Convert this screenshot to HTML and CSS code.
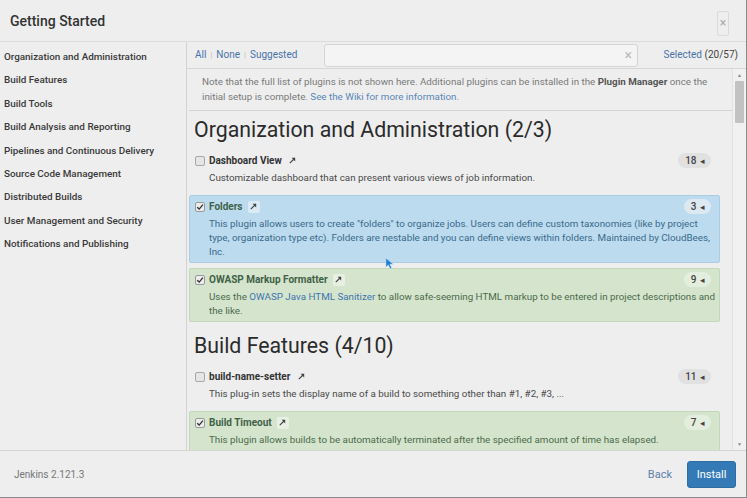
FILE: index.html
```html
<!DOCTYPE html>
<html>
<head>
<meta charset="utf-8">
<link rel="stylesheet" href="styles.css">
</head>
<body>
<div class="modal">
  <div class="header">
    <div class="title">Getting Started</div>
    <div class="close">×</div>
  </div>
  <div class="body">
    <div class="sidebar">
      <div class="cat">Organization and Administration</div>
      <div class="cat">Build Features</div>
      <div class="cat">Build Tools</div>
      <div class="cat">Build Analysis and Reporting</div>
      <div class="cat">Pipelines and Continuous Delivery</div>
      <div class="cat">Source Code Management</div>
      <div class="cat">Distributed Builds</div>
      <div class="cat">User Management and Security</div>
      <div class="cat">Notifications and Publishing</div>
    </div>
    <div class="main">
      <div class="toolbar">
        <div class="filters"><a>All</a><span class="sep">|</span><a>None</a><span class="sep">|</span><a>Suggested</a></div>
        <div class="search"><span class="clear">×</span></div>
        <div class="selected"><a>Selected</a> (20/57)</div>
      </div>
      <div class="scrollwrap">
        <div class="content">
          <div class="note">Note that the full list of plugins is not shown here. Additional plugins can be installed in the <b>Plugin Manager</b> once the initial setup is complete. <a>See the Wiki for more information.</a></div>

          <h2 class="heading">Organization and Administration (2/3)</h2>
          <div class="plugin">
            <div class="phead">
              <span class="cb"></span><span class="pname">Dashboard View</span><span class="ext"><svg viewBox="0 0 10 10" width="9" height="9"><path d="M2 8 L7.5 2.5" stroke="#444" stroke-width="1.3"/><path d="M4 2 H8 V6 Z" fill="#444"/></svg></span>
              <span class="badge">18 <i>◂</i></span>
            </div>
            <div class="pdesc">Customizable dashboard that can present various views of job information.</div>
          </div>
          <div class="plugin info">
            <div class="phead">
              <span class="cb on"><svg viewBox="0 0 10 10" width="8" height="8"><path d="M1.5 5.2 L4 7.6 L8.6 2" stroke="#333" stroke-width="1.7" fill="none"/></svg></span><span class="pname">Folders</span><span class="ext"><svg viewBox="0 0 10 10" width="9" height="9"><path d="M2 8 L7.5 2.5" stroke="#444" stroke-width="1.3"/><path d="M4 2 H8 V6 Z" fill="#444"/></svg></span>
              <span class="badge">3 <i>◂</i></span>
            </div>
            <div class="pdesc">This plugin allows users to create "folders" to organize jobs. Users can define custom taxonomies (like by project type, organization type etc). Folders are nestable and you can define views within folders. Maintained by CloudBees, Inc.</div>
          </div>
          <div class="plugin success">
            <div class="phead">
              <span class="cb on"><svg viewBox="0 0 10 10" width="8" height="8"><path d="M1.5 5.2 L4 7.6 L8.6 2" stroke="#333" stroke-width="1.7" fill="none"/></svg></span><span class="pname">OWASP Markup Formatter</span><span class="ext"><svg viewBox="0 0 10 10" width="9" height="9"><path d="M2 8 L7.5 2.5" stroke="#444" stroke-width="1.3"/><path d="M4 2 H8 V6 Z" fill="#444"/></svg></span>
              <span class="badge">9 <i>◂</i></span>
            </div>
            <div class="pdesc">Uses the <a>OWASP Java HTML Sanitizer</a> to allow safe-seeming HTML markup to be entered in project descriptions and the like.</div>
          </div>

          <h2 class="heading">Build Features (4/10)</h2>
          <div class="plugin">
            <div class="phead">
              <span class="cb"></span><span class="pname">build-name-setter</span><span class="ext"><svg viewBox="0 0 10 10" width="9" height="9"><path d="M2 8 L7.5 2.5" stroke="#444" stroke-width="1.3"/><path d="M4 2 H8 V6 Z" fill="#444"/></svg></span>
              <span class="badge">11 <i>◂</i></span>
            </div>
            <div class="pdesc">This plug-in sets the display name of a build to something other than #1, #2, #3, ...</div>
          </div>
          <div class="plugin success">
            <div class="phead">
              <span class="cb on"><svg viewBox="0 0 10 10" width="8" height="8"><path d="M1.5 5.2 L4 7.6 L8.6 2" stroke="#333" stroke-width="1.7" fill="none"/></svg></span><span class="pname">Build Timeout</span><span class="ext"><svg viewBox="0 0 10 10" width="9" height="9"><path d="M2 8 L7.5 2.5" stroke="#444" stroke-width="1.3"/><path d="M4 2 H8 V6 Z" fill="#444"/></svg></span>
              <span class="badge">7 <i>◂</i></span>
            </div>
            <div class="pdesc">This plugin allows builds to be automatically terminated after the specified amount of time has elapsed.</div>
          </div>
        </div>
        <div class="scrollbar">
          <div class="arrow up">▲</div>
          <div class="track"><div class="thumb"></div></div>
          <div class="arrow down">▼</div>
        </div>
        <svg class="cursor" viewBox="0 0 12 14" width="11" height="13"><path d="M1 1 L1 11 L3.6 8.6 L5.6 12.8 L7.4 12 L5.4 7.9 L9 7.9 Z" fill="#1f7fd1" stroke="#cfe4f5" stroke-width="0.6"/></svg>
      </div>
    </div>
  </div>
  <div class="footer">
    <div class="version">Jenkins 2.121.3</div>
    <div class="actions">
      <a class="back">Back</a>
      <a class="install">Install</a>
    </div>
  </div>
</div>
</body>
</html>
```
FILE: styles.css
```css
* { box-sizing: border-box; }
html, body { margin: 0; padding: 0; }
body {
  font-family: Roboto, "Liberation Sans", Arial, sans-serif;
  background: #eeeeee;
  color: #333;
  width: 747px;
  height: 498px;
  overflow: hidden;
}
a { color: #4a72a8; text-decoration: none; }

.modal {
  width: 747px;
  height: 498px;
  display: flex;
  flex-direction: column;
  background: #eeeeee;
  border-right: 1px solid #8a8a8a;
  border-bottom: 1px solid #8a8a8a;
}

.header {
  height: 42px;
  flex: none;
  display: flex;
  align-items: center;
  justify-content: space-between;
  padding: 0 17px 0 10px;
  border-bottom: 1px solid #dcdcdc;
}
.title { font-size: 14px; font-weight: 500; color: #333; }
.close {
  width: 12px;
  height: 25px;
  border: 1px solid #dadada;
  border-radius: 2px;
  color: #aaa;
  font-size: 12px;
  line-height: 23px;
  text-align: center;
  margin-top: 5px;
}

.body { flex: 1; display: flex; min-height: 0; }

.sidebar {
  width: 187px;
  flex: none;
  border-right: 1px solid #d2d2d2;
  padding-top: 3px;
}
.cat {
  height: 23.4px;
  line-height: 23.4px;
  padding-left: 4px;
  font-size: 9.9px;
  font-weight: 500;
  color: #3a3a3a;
  white-space: nowrap;
}

.main { flex: 1; display: flex; flex-direction: column; min-width: 0; }

.toolbar {
  height: 27px;
  flex: none;
  display: flex;
  align-items: center;
  border-bottom: 1px solid #d6d6d6;
  padding: 0 8px 1px 8px;
  font-size: 10px;
}
.filters { width: 129px; flex: none; }
.filters a { color: #4a72a8; }
.sep { color: #bbb; font-size: 8px; margin: 0 4px; position: relative; top: -1px; }
.search {
  width: 314px;
  height: 23px;
  flex: none;
  border: 1px solid #d4d4d4;
  border-radius: 3px;
  background: #f4f4f4;
  position: relative;
  margin-top: 2px;
}
.clear {
  position: absolute;
  right: 5px;
  top: 3px;
  color: #bbb;
  font-size: 14px;
  line-height: 14px;
}
.selected { margin-left: auto; color: #444; }
.selected a { color: #4a72a8; }

.scrollwrap { flex: 1; display: flex; min-height: 0; position: relative; overflow: hidden; }
.content { flex: 1; min-width: 0; overflow: hidden; padding-left: 2px; }

.note {
  padding: 5px 16px 6px 13px;
  border-bottom: 1px solid #d4d4d4;
  font-size: 9.8px;
  line-height: 15px;
  color: #7a7a7a;
}
.note b { color: #555; font-weight: 700; }
.note a { color: #5a86b8; }

.heading {
  margin: 6px 0 6px 5px;
  font-size: 21.3px;
  line-height: 26px;
  font-weight: 400;
  color: #2b2b2b;
  white-space: nowrap;
}
.plugin + .heading { margin-top: 11px; }

.plugin {
  margin: 0 12px 5px 0;
  padding: 3px 1px 3px 5px;
  border: 1px solid transparent;
  border-radius: 2px;
}
.plugin.info { background: #bcdbef; border-color: #a9cde4; }
.plugin.success { background: #d5e4cd; border-color: #c3d8b8; }

.phead {
  height: 15px;
  display: flex;
  align-items: center;
}
.cb {
  width: 10px;
  height: 10px;
  border: 1px solid #a8a8a8;
  border-radius: 2px;
  background: #e6e6e6;
  margin-right: 4px;
  display: flex;
  align-items: center;
  justify-content: center;
}
.cb.on { background: #ececec; border-color: #999; }
.pname { font-size: 10px; font-weight: 700; color: #333; }
.info .pname, .success .pname { color: #3f6147; }
.ext {
  width: 12px;
  height: 12px;
  margin-left: 5px;
  display: flex;
  align-items: center;
  justify-content: center;
  border-radius: 2px;
}
.info .ext, .success .ext { background: rgba(255,255,255,0.45); }
.badge {
  margin-left: auto;
  margin-right: 7px;
  height: 15px;
  padding: 0 6px 0 7px;
  border-radius: 8px;
  background: #e1e1e1;
  font-size: 10px;
  font-weight: 500;
  line-height: 15px;
  color: #444;
  white-space: nowrap;
}
.badge i { font-style: normal; font-size: 9px; margin-left: 1px; }
.info .badge { background: #dce9f2; }
.success .badge { background: #e4eedf; }

.pdesc {
  margin: 3px 0 0 14px;
  font-size: 9.8px;
  line-height: 14px;
  color: #4a4a4a;
}
.plugin:not(.info):not(.success) .pdesc { margin-bottom: 1px; }
.info .pdesc { color: #3a6a8a; }
.success .pdesc { color: #4b6b4b; }
.success .pdesc a { color: #3e74ad; }

.scrollbar {
  width: 14px;
  flex: none;
  background: #f1f1f1;
  border-left: 1px solid #e2e2e2;
  display: flex;
  flex-direction: column;
}
.arrow { height: 12px; font-size: 5px; color: #888; text-align: center; line-height: 12px; }
.track { flex: 1; padding: 0 2px; }
.thumb { height: 42px; background: #c2c2c2; border-radius: 1px; }

.cursor { position: absolute; left: 198px; top: 188px; }

.footer {
  height: 47px;
  flex: none;
  border-top: 1px solid #d4d4d4;
  display: flex;
  align-items: center;
  justify-content: space-between;
  padding: 0 10px 0 14px;
}
.version { font-size: 10px; color: #777; }
.actions { display: flex; align-items: center; }
.back { font-size: 11px; color: #5b7fab; margin-right: 15px; }
.install {
  width: 49px;
  height: 27px;
  background: #337ab7;
  border: 1px solid #2e6da4;
  border-radius: 3px;
  color: #fff;
  font-size: 11px;
  line-height: 25px;
  text-align: center;
  margin-top: 1px;
}
```
